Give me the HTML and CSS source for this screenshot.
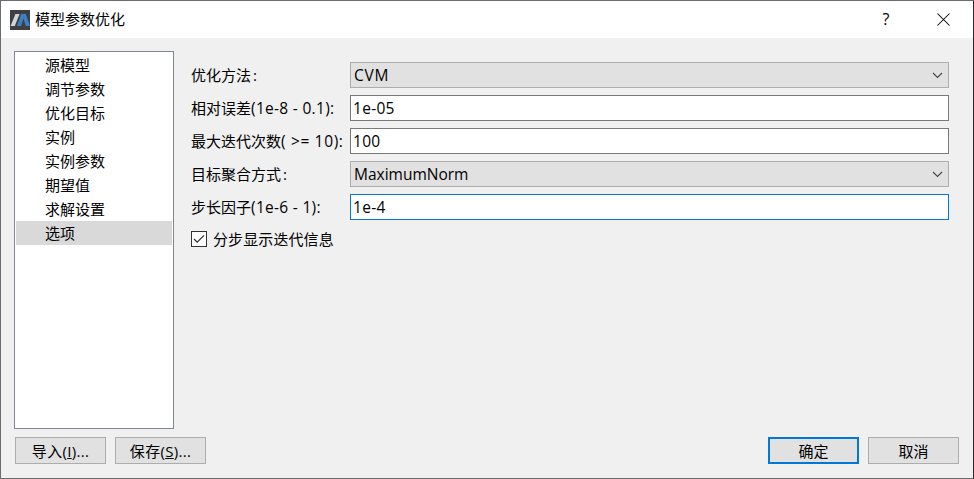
FILE: index.html
```html
<!DOCTYPE html>
<html lang="zh-CN">
<head>
<meta charset="utf-8">
<title>模型参数优化</title>
<link rel="stylesheet" href="styles.css">
</head>
<body>
<div class="dialog">
  <header class="titlebar">
    <svg class="logo" width="20" height="20" viewBox="0 0 20 20">
      <rect width="20" height="20" fill="#3d3f42"/>
      <path d="M.6 16 L5.4 4 H9.6 L4.8 16 Z" fill="#d2d4d6"/>
      <path d="M7 16 L11.2 4 H15.8 L20 16 H15.8 L13.5 8.6 L11 16 Z" fill="#3c7fc6"/>
    </svg>
    <h1 class="title">模型参数优化</h1>
    <span class="help">?</span>
    <svg class="close" width="13" height="13" viewBox="0 0 13 13"><path d="M.5 .5 L12.5 12.5 M12.5 .5 L.5 12.5" stroke="#000" stroke-width="1.05" fill="none"/></svg>
  </header>
  <main class="content">
    <ul class="nav">
      <li>源模型</li>
      <li>调节参数</li>
      <li>优化目标</li>
      <li>实例</li>
      <li>实例参数</li>
      <li>期望值</li>
      <li>求解设置</li>
      <li class="selected">选项</li>
    </ul>
    <section class="form">
      <div class="row"><span class="label">优化方法<span class="colon">:</span></span><div class="field combo"><span class="method">CVM</span><svg width="11" height="7" viewBox="0 0 11 7"><path d="M1 1 L5.5 5.5 L10 1" fill="none" stroke="#444" stroke-width="1.1"/></svg></div></div>
      <div class="row"><span class="label">相对误差<span class="latin">(1e-8 - 0.1):</span></span><div class="field"><span class="number">1e-05</span></div></div>
      <div class="row"><span class="label">最大迭代次数<span class="latin wide">( &gt;= 10):</span></span><div class="field"><span class="number">100</span></div></div>
      <div class="row"><span class="label">目标聚合方式<span class="colon">:</span></span><div class="field combo"><span>MaximumNorm</span><svg width="11" height="7" viewBox="0 0 11 7"><path d="M1 1 L5.5 5.5 L10 1" fill="none" stroke="#444" stroke-width="1.1"/></svg></div></div>
      <div class="row"><span class="label">步长因子<span class="latin">(1e-6 - 1):</span></span><div class="field focused"><span class="number">1e-4</span></div></div>
      <div class="check"><svg width="16" height="16" viewBox="0 0 16 16"><rect x=".5" y=".5" width="15" height="15" fill="#fff" stroke="#333"/><path d="M3 8 L6.2 11.2 L13 4.4" fill="none" stroke="#333" stroke-width="1.3"/></svg><span class="check-text">分步显示迭代信息</span></div>
    </section>
  </main>
  <footer class="buttons">
    <div class="button wide-text">导入(<u>I</u>)...</div>
    <div class="button wide-text">保存(<u>S</u>)...</div>
    <div class="button primary">确定</div>
    <div class="button">取消</div>
  </footer>
</div>
</body>
</html>
```
FILE: styles.css
```css
* { box-sizing: border-box; }
body {
  margin: 0;
  color: #000;
  font: 15px/24px "Open Sans", "Noto Sans CJK SC", sans-serif;
}
.dialog {
  display: flex;
  flex-direction: column;
  width: 974px;
  height: 479px;
  border: 1px solid #6c6c6e;
  border-right-color: #302429;
  background: #f0f0f0;
}
.titlebar {
  display: flex;
  align-items: center;
  height: 37px;
  padding: 0 23px 0 9px;
  background: #fff;
}
.title { flex: 1; margin: 0 0 2px 5px; font-size: 15px; font-weight: 400; }
.help { width: 10px; margin: 0 46px 2px 0; text-align: center; font-size: 16px; }
.content { display: flex; height: 378px; margin: 13px 24px 0 13px; }
.nav {
  width: 160px;
  margin: 0 17px 0 0;
  padding: 1px;
  border: 1px solid #828790;
  background: #fff;
  list-style: none;
}
.nav li { height: 24px; padding-left: 29px; }
.selected { background: #d9d9d9; }
.form { flex: 1; padding-top: 11px; }
.row { display: flex; align-items: center; height: 26px; margin-bottom: 7px; }
.label { width: 159px; white-space: nowrap; }
.latin { font-size: 15.5px; letter-spacing: .3px; }
.wide { letter-spacing: .65px; }
.colon { margin-left: 2px; }
.field {
  display: flex;
  flex: 1;
  align-items: center;
  justify-content: space-between;
  height: 26px;
  padding: 0 5px 0 2px;
  border: 1px solid #7a7a7a;
  background: #fff;
  font-size: 15.5px;
}
.combo { padding-left: 3px; border-color: #adadad; background: #e1e1e1; }
.focused { border-color: #0078d7; }
.method { letter-spacing: .8px; }
.number { letter-spacing: .3px; }
.check { display: flex; align-items: center; gap: 6px; height: 24px; }
.check-text { letter-spacing: .1px; }
.buttons { display: flex; gap: 9px; margin: 8px 14px 0; }
.button {
  width: 91px;
  height: 27px;
  border: 1px solid #adadad;
  background: #e1e1e1;
  text-align: center;
  line-height: 27px;
}
.wide-text { letter-spacing: .3px; }
.primary { margin-left: auto; border: 2px solid #0078d7; line-height: 25px; }
```
